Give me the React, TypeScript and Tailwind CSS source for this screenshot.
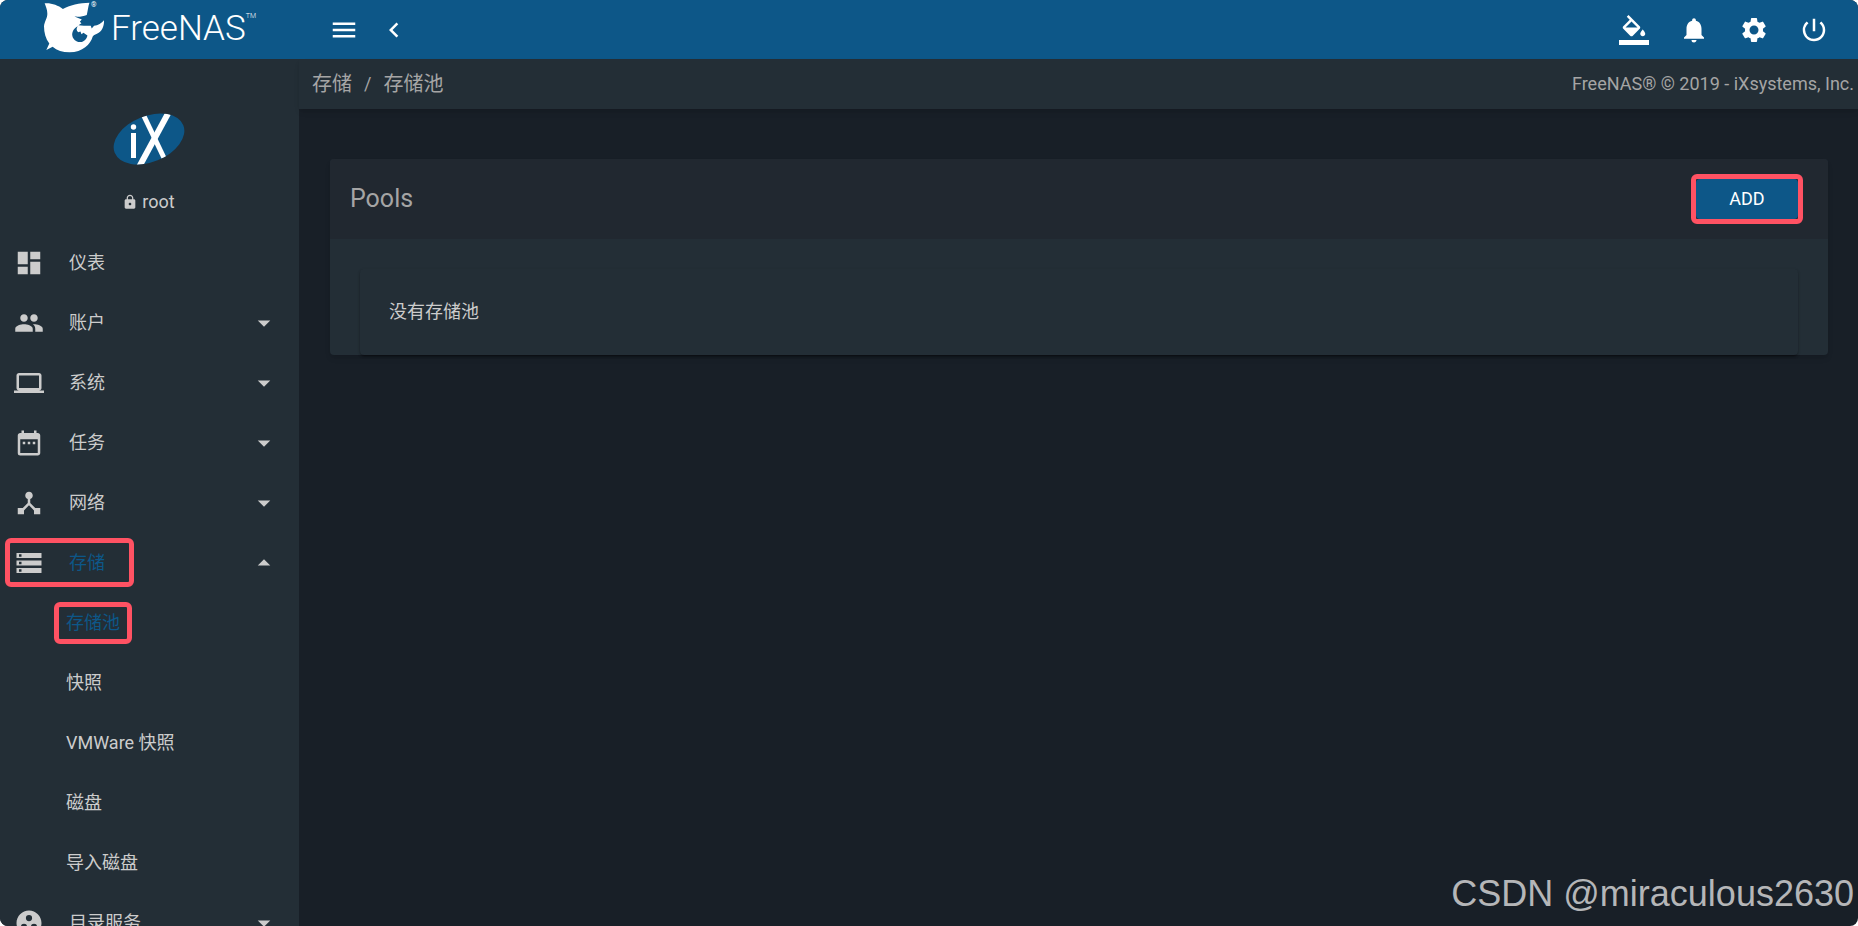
import { useState } from 'react';
import type { IconType } from 'react-icons';
import {
  MdArrowDropDown,
  MdArrowDropUp,
  MdChevronLeft,
  MdDashboard,
  MdDateRange,
  MdDeviceHub,
  MdGroupWork,
  MdLaptop,
  MdLock,
  MdMenu,
  MdNotifications,
  MdPeople,
  MdPowerSettingsNew,
  MdSettings,
  MdStorage,
} from 'react-icons/md';

interface NavItem {
  label: string;
  icon: IconType;
  expandable?: boolean;
  children?: string[];
}

const NAV_ITEMS: NavItem[] = [
  { label: '仪表', icon: MdDashboard },
  { label: '账户', icon: MdPeople, expandable: true },
  { label: '系统', icon: MdLaptop, expandable: true },
  { label: '任务', icon: MdDateRange, expandable: true },
  { label: '网络', icon: MdDeviceHub, expandable: true },
  {
    label: '存储',
    icon: MdStorage,
    expandable: true,
    children: ['存储池', '快照', 'VMWare 快照', '磁盘', '导入磁盘'],
  },
  { label: '目录服务', icon: MdGroupWork, expandable: true },
];

const ACTIVE_PAGE = '存储池';

// Red frame drawn around whatever the guide points at
function Highlight({ className }: { className: string }) {
  return (
    <span
      aria-hidden="true"
      className={`absolute border-5 border-[#ff5263] rounded-md pointer-events-none ${className}`}
    />
  );
}

function SharkLogo() {
  return (
    <svg viewBox="0 0 184 152" className="block w-[61px] h-[51px]" fill="#fff" aria-hidden="true">
      <path d="M2 3C20 1 42 8 57 20C76 8 108 2 137 1C133 13 132 27 129 38C118 43 105 44 92 43L114 52L108 59L113 63L104 69L120 71L141 71L144 79L151 71C163 70 174 63 181 54C182 68 177 84 165 92C158 97 151 98 147 103C140 127 117 150 77 151C56 151 39 145 26 134L7 144L16 124C5 110 0 91 0 72C1 58 11 48 10 33C10 22 5 12 2 3ZM102 72C90 78 85 88 85 98C86 111 97 121 110 120C121 119 129 110 131 100L119 92L113 96L110 88L103 90C97 84 97 78 102 72Z" />
    </svg>
  );
}

function IxLogo() {
  return (
    <svg viewBox="0 0 72 54" className="w-[72px] h-[54px]" role="img" aria-label="iXsystems">
      <defs>
        <clipPath id="ix-oval">
          <ellipse cx="36" cy="27" rx="37" ry="23" transform="rotate(-22 36 27)" />
        </clipPath>
      </defs>
      <g clipPath="url(#ix-oval)">
        <rect width="72" height="54" fill="#0d5788" />
        <path d="M29 0L52 48" stroke="#fff" strokeWidth="5" />
        <path d="M58 -4L25 57" stroke="#fff" strokeWidth="6" />
        <rect x="18" y="21" width="5" height="25" fill="#fff" />
        <circle cx="20.5" cy="15" r="2.7" fill="#fff" />
      </g>
    </svg>
  );
}

// Paint bucket over a full-width colour bar
function ThemeIcon() {
  return (
    <svg viewBox="0 0 24 24" className="w-[30px] h-[30px]" fill="currentColor" aria-hidden="true">
      <path d="M16.56 8.94L7.62 0 6.21 1.41l2.38 2.38-5.15 5.15c-.59.59-.59 1.54 0 2.12l5.5 5.5c.29.29.68.44 1.06.44s.77-.15 1.06-.44l5.5-5.5c.59-.58.59-1.53 0-2.12zM5.21 10L10 5.21 14.79 10H5.21zM19 11.5s-2 2.17-2 3.5c0 1.1.9 2 2 2s2-.9 2-2c0-1.33-2-3.5-2-3.5z" />
      <path d="M0 20h24v4H0z" />
    </svg>
  );
}

function Sidebar({ open, onToggle }: { open: string; onToggle: (label: string) => void }) {
  return (
    <aside className="w-[299px] shrink-0 flex flex-col bg-[#232e36] overflow-hidden">
      <div className="flex flex-col items-center pt-[53px] pb-[15px] pr-0.5">
        <IxLogo />
        <div className="mt-5 h-8 flex items-center gap-1 text-lg">
          <MdLock className="w-4 h-4" />
          <span>root</span>
        </div>
      </div>

      <nav>
        <ul>
          {NAV_ITEMS.map(item => {
            const Icon = item.icon;
            const isOpen = item.label === open;
            const Arrow = isOpen ? MdArrowDropUp : MdArrowDropDown;

            return (
              <li key={item.label}>
                <button
                  type="button"
                  aria-expanded={item.expandable ? isOpen : undefined}
                  onClick={() => onToggle(item.label)}
                  className="relative w-full h-15 pl-3.5 pr-5 flex items-center text-lg text-left"
                >
                  <Icon className="w-[30px] h-[30px]" />
                  <span className={`ml-[25px] flex-1 ${isOpen ? 'text-[#0d5788]' : ''}`}>
                    {item.label}
                  </span>
                  {item.expandable && <Arrow className="w-[30px] h-[30px]" />}
                  {isOpen && <Highlight className="left-[5px] top-[5px] w-[129px] h-[49px]" />}
                </button>

                {isOpen && item.children && (
                  <ul>
                    {item.children.map(child => (
                      <li key={child} className="h-15 pl-[66px] flex items-center text-lg">
                        <a
                          href="#"
                          className={`relative ${child === ACTIVE_PAGE ? 'text-[#0d5788]' : ''}`}
                        >
                          {child}
                          {child === ACTIVE_PAGE && <Highlight className="-inset-x-3 -inset-y-[7px]" />}
                        </a>
                      </li>
                    ))}
                  </ul>
                )}
              </li>
            );
          })}
        </ul>
      </nav>
    </aside>
  );
}

function TopBar() {
  return (
    <header className="h-[59px] shrink-0 flex items-center bg-[#0d5788] text-white">
      <a href="#" aria-label="FreeNAS" className="w-[299px] h-full pl-11 pb-1 flex items-center">
        <span className="relative">
          <SharkLogo />
          <span className="absolute left-[47px] top-0 text-[7px] leading-none">®</span>
        </span>
        <span className="relative ml-1.5 pt-1 text-[35px] font-light">
          FreeNAS
          <span className="absolute left-full top-3 text-[7px]">TM</span>
        </span>
      </a>
      <div className="flex-1 flex items-center pl-[30px] pr-[29px]">
        <button type="button" aria-label="Toggle menu">
          <MdMenu className="w-[30px] h-[30px]" />
        </button>
        <button type="button" aria-label="Collapse menu" className="ml-5">
          <MdChevronLeft className="w-[30px] h-[30px]" />
        </button>
        <div className="ml-auto flex items-center gap-[30px]">
          <button type="button" aria-label="Theme">
            <ThemeIcon />
          </button>
          <button type="button" aria-label="Notifications">
            <MdNotifications className="w-[30px] h-[30px]" />
          </button>
          <button type="button" aria-label="Settings">
            <MdSettings className="w-[30px] h-[30px]" />
          </button>
          <button type="button" aria-label="Power">
            <MdPowerSettingsNew className="w-[30px] h-[30px]" />
          </button>
        </div>
      </div>
    </header>
  );
}

export default function App() {
  const [open, setOpen] = useState('存储');

  const handleToggle = (label: string) => {
    setOpen(open === label ? '' : label);
  };

  return (
    <div className="relative h-screen flex flex-col overflow-hidden rounded-lg bg-[#181f27] text-[#cccccc] font-[Roboto,'Noto_Sans_CJK_SC',sans-serif]">
      <TopBar />

      <div className="flex-1 min-h-0 flex">
        <Sidebar open={open} onToggle={handleToggle} />

        <main className="flex-1 min-w-0">
          <div className="h-[50px] pl-[13px] pr-1 flex items-center justify-between bg-[#232e36] text-[#a5a5a5] shadow-md">
            <nav aria-label="Breadcrumb" className="flex items-center text-xl">
              <a href="#">存储</a>
              <span className="mx-3 text-lg">/</span>
              <a href="#">存储池</a>
            </nav>
            <p className="text-lg">FreeNAS® © 2019 - iXsystems, Inc.</p>
          </div>

          {/* Pools card */}
          <section className="mt-[50px] ml-[31px] mr-[30px] rounded-sm bg-[#232e36] shadow-md">
            <div className="h-20 pl-5 pr-[30px] flex items-center justify-between rounded-t-sm bg-[#212830]">
              <h1 className="text-[25px] text-[#a5a5a5]">Pools</h1>
              <button
                type="button"
                className="relative w-[102px] h-10 rounded-sm bg-[#0d5788] text-white text-lg"
              >
                ADD
                <Highlight className="-inset-[5px]" />
              </button>
            </div>
            <div className="pt-[30px] px-[30px]">
              <p className="h-[86px] px-[29px] flex items-center text-lg rounded-sm shadow-[0_2px_3px_-1px_rgba(0,0,0,0.5),0_1px_3px_rgba(0,0,0,0.15)]">
                没有存储池
              </p>
            </div>
          </section>
        </main>
      </div>

      <p className="absolute right-1 bottom-3 text-4xl text-[#b5b6b8] font-['Liberation_Sans',sans-serif]">
        CSDN @miraculous2630
      </p>
    </div>
  );
}
